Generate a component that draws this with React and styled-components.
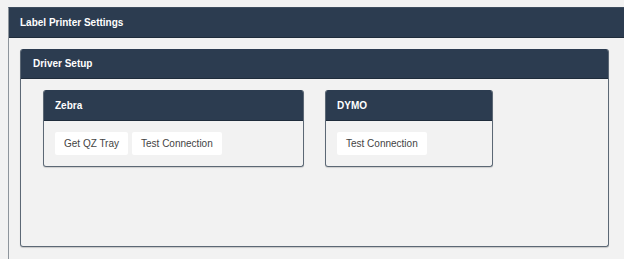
import React from 'react';
import styled, { createGlobalStyle } from 'styled-components';

const GlobalStyle = createGlobalStyle`
    html, body {
        margin: 0;
        padding: 0;
        overflow: hidden;
        background-color: #f2f2f2;
        font-family: 'Liberation Sans', Arial, sans-serif;
    }
`;

const drivers = [
    { name: "Zebra", actions: ["Get QZ Tray", "Test Connection"] },
    { name: "DYMO", actions: ["Test Connection"] }
];

const Page = styled.div`
    width: 624px;
    height: 259px;
    padding: 7px 0 0 8px;
    box-sizing: border-box;
    overflow: hidden;
`;

const Panel = styled.section`
    width: 640px;
    height: 280px;
    border-left: 1px solid #8e959c;
    border-top: 1px solid #3d4c5e;
    background-color: #f2f2f2;
`;

const Header = styled.div`
    height: ${props => props.size}px;
    display: flex;
    align-items: center;
    padding-left: ${props => props.indent}px;
    background-color: #2c3c50;
    border-bottom: 1px solid #1f2c3b;
    color: #ffffff;
    font-size: 10px;
    font-weight: bold;
    box-sizing: border-box;
`;

const PanelBody = styled.div`
    padding: 11px 0 0 11px;
`;

const SubPanel = styled.div`
    width: 589px;
    box-sizing: border-box;
    border: 1px solid #5c6875;
    border-top: none;
    border-radius: 3px;
    overflow: hidden;
    box-shadow: 0 1px 1px rgba(0, 0, 0, 0.18);
`;

const SubBody = styled.div`
    height: 167px;
    display: flex;
    align-items: flex-start;
    gap: 21px;
    padding: 11px 0 0 22px;
    box-sizing: border-box;
`;

const Card = styled.div`
    width: ${props => props.width}px;
    box-sizing: border-box;
    border: 1px solid #5c6875;
    border-top: none;
    border-radius: 3px;
    overflow: hidden;
    box-shadow: 0 1px 1px rgba(0, 0, 0, 0.15);
`;

const CardBody = styled.div`
    display: flex;
    gap: 4px;
    padding: 11px;
`;

const Button = styled.button`
    height: 23px;
    padding: 0 9px;
    border: none;
    border-radius: 2px;
    background-color: #ffffff;
    color: #444444;
    font-family: 'Liberation Sans', Arial, sans-serif;
    font-size: 10px;
    cursor: pointer;
`;

function DriverCard({ driver, width }) {
    return (
        <Card width={width}>
            <Header size={31} indent={11}>{driver.name}</Header>
            <CardBody>
                {driver.actions.map(a => <Button key={a}>{a}</Button>)}
            </CardBody>
        </Card>
    );
}

export default function App() {
    return (
        <Page>
            <GlobalStyle />
            <Panel>
                <Header size={30} indent={11}>Label Printer Settings</Header>
                <PanelBody>
                    <SubPanel>
                        <Header size={30} indent={12}>Driver Setup</Header>
                        <SubBody>
                            <DriverCard driver={drivers[0]} width={261} />
                            <DriverCard driver={drivers[1]} width={168} />
                        </SubBody>
                    </SubPanel>
                </PanelBody>
            </Panel>
        </Page>
    );
}
